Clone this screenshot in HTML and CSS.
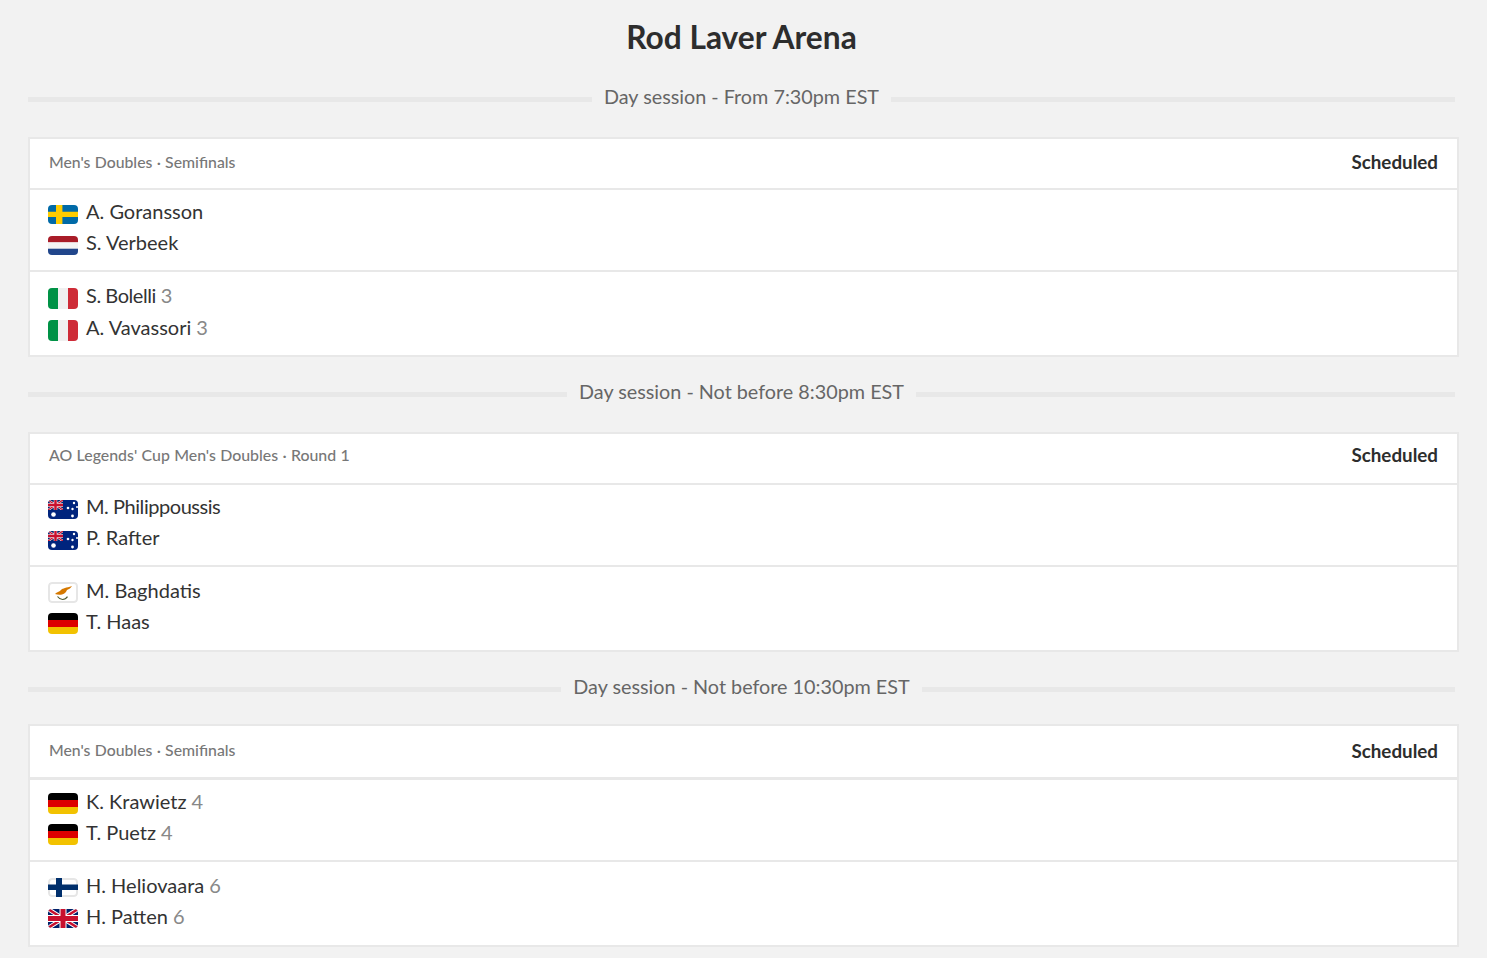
FILE: index.html
```html
<!DOCTYPE html>
<html lang="en">
<head>
<meta charset="utf-8">
<title>Rod Laver Arena</title>
<link rel="stylesheet" href="styles.css">
</head>
<body>
<svg class="defs" width="0" height="0" aria-hidden="true">
  <defs>
    <symbol id="jack" viewBox="0 0 30 19" preserveAspectRatio="none">
      <rect width="30" height="19" fill="#012169"/>
      <path d="M0 0L30 19M30 0L0 19" stroke="#fff" stroke-width="4.400"/>
      <path d="M0 0L30 19M30 0L0 19" stroke="#c8102e" stroke-width="2.400"/>
      <path d="M15 0V19M0 9.500H30" stroke="#fff" stroke-width="7"/>
      <path d="M15 0V19M0 9.500H30" stroke="#c8102e" stroke-width="5"/>
    </symbol>
    <symbol id="se" viewBox="0 0 30 19"><rect width="30" height="19" fill="#006aa7"/><path d="M8 0h6.400v19H8zM0 6.800h30v5.200H0z" fill="#fecc00"/></symbol>
    <symbol id="nl" viewBox="0 0 30 19"><rect width="30" height="6.400" fill="#a91c28"/><rect y="6.400" width="30" height="6.300" fill="#f4f4f4"/><rect y="12.700" width="30" height="6.300" fill="#21468b"/></symbol>
    <symbol id="it" viewBox="0 0 30 21"><rect width="30" height="21" fill="#f0f0f0"/><rect width="10" height="21" fill="#009246"/><rect x="20" width="10" height="21" fill="#ce2b37"/></symbol>
    <symbol id="de" viewBox="0 0 30 21"><rect width="30" height="7" fill="#000"/><rect y="7" width="30" height="7" fill="#dd0000"/><rect y="14" width="30" height="7" fill="#f2c200"/></symbol>
    <symbol id="au" viewBox="0 0 30 19">
      <rect width="30" height="19" fill="#00247d"/>
      <use href="#jack" width="15" height="10"/>
      <g fill="#fff"><circle cx="5.500" cy="14.500" r="2.300"/><circle cx="20" cy="8" r="1.300"/><circle cx="26" cy="3" r="1.200"/><circle cx="24.500" cy="9" r="1.200"/><circle cx="29" cy="7" r="1"/><circle cx="24.500" cy="16" r="1.400"/></g>
    </symbol>
    <symbol id="cy" viewBox="0 0 30 21">
      <rect x="1" y="1" width="28" height="19" rx="3" fill="#fff" stroke="#e6e6e6" stroke-width="2"/>
      <path d="M7 12c2-2 4-2 6-4s5-2 11-4c-1 2-3 3-5 4-1 2-2 4-5 4.500-3 .5-5 0-7-.5z" fill="#d57800"/>
      <path d="M9.500 14.500c1.500 2 3.500 3 5 3 1.800 0 3.800-1 5-2.800" fill="none" stroke="#4e5b31" stroke-width="1.200"/>
    </symbol>
    <symbol id="fi" viewBox="0 0 30 19">
      <rect x="1" y="1" width="28" height="17" rx="3" fill="#fff" stroke="#e6e6e6" stroke-width="2"/>
      <path d="M8 0h6v19H8zM0 6.500h30v5.500H0z" fill="#002f6c"/>
    </symbol>
  </defs>
</svg>

<main class="page">
  <h1 class="title">Rod Laver Arena</h1>

  <div class="session"><span class="session-text">Day session - From 7:30pm EST</span></div>
  <section class="card">
    <header class="card-head"><span class="event">Men's Doubles · Semifinals</span><span class="status">Scheduled</span></header>
    <div class="team">
      <div class="player"><svg class="flag flag-s"><use href="#se"/></svg><span class="name">A. Goransson</span></div>
      <div class="player"><svg class="flag flag-s"><use href="#nl"/></svg><span class="name">S. Verbeek</span></div>
    </div>
    <div class="team team-tall team-wide">
      <div class="player"><svg class="flag"><use href="#it"/></svg><span class="name name-narrow">S. Bolelli</span><span class="seed">3</span></div>
      <div class="player"><svg class="flag"><use href="#it"/></svg><span class="name">A. Vavassori</span><span class="seed">3</span></div>
    </div>
  </section>

  <div class="session"><span class="session-text">Day session - Not before 8:30pm EST</span></div>
  <section class="card">
    <header class="card-head"><span class="event event-high">AO Legends' Cup Men's Doubles · Round 1</span><span class="status status-high">Scheduled</span></header>
    <div class="team">
      <div class="player"><svg class="flag flag-s"><use href="#au"/></svg><span class="name name-narrow">M. Philippoussis</span></div>
      <div class="player"><svg class="flag flag-s"><use href="#au"/></svg><span class="name">P. Rafter</span></div>
    </div>
    <div class="team team-tall">
      <div class="player"><svg class="flag"><use href="#cy"/></svg><span class="name">M. Baghdatis</span></div>
      <div class="player"><svg class="flag"><use href="#de"/></svg><span class="name">T. Haas</span></div>
    </div>
  </section>

  <div class="session session-last"><span class="session-text">Day session - Not before 10:30pm EST</span></div>
  <section class="card card-last">
    <header class="card-head"><span class="event">Men's Doubles · Semifinals</span><span class="status">Scheduled</span></header>
    <div class="team">
      <div class="player"><svg class="flag"><use href="#de"/></svg><span class="name">K. Krawietz</span><span class="seed">4</span></div>
      <div class="player"><svg class="flag"><use href="#de"/></svg><span class="name">T. Puetz</span><span class="seed">4</span></div>
    </div>
    <div class="team team-tall">
      <div class="player"><svg class="flag flag-s"><use href="#fi"/></svg><span class="name">H. Heliovaara</span><span class="seed">6</span></div>
      <div class="player"><svg class="flag flag-s"><use href="#jack"/></svg><span class="name">H. Patten</span><span class="seed">6</span></div>
    </div>
  </section>
</main>
</body>
</html>
```
FILE: styles.css
```css
* { box-sizing: border-box; }
html, body { margin: 0; height: 100%; overflow: hidden; }
body {
  background: #f2f2f2;
  color: #333;
  font-family: Lato, "Liberation Sans", sans-serif;
}
.defs { position: absolute; }
.page { margin: 0 32px 0 28px; }
.title {
  margin: 0;
  padding-top: 17px;
  height: 62px;
  font-size: 31.7px;
  line-height: 40px;
  font-weight: 700;
  text-align: center;
  color: #2d2d2d;
}
.session {
  display: flex;
  align-items: center;
  gap: 12px;
  height: 75px;
  color: #666;
  font-size: 19.8px;
}
.session::before, .session::after {
  content: "";
  flex: 1;
  height: 5px;
  background: #e8e8e8;
}
.session-last { height: 72px; padding-top: 3px; }
.session-text { white-space: nowrap; padding-bottom: 7px; }
.card {
  margin-right: -4px;
  background: #fff;
  border: 2px solid #e8e8e8;
}
.card-head {
  display: flex;
  align-items: center;
  justify-content: space-between;
  height: 51px;
  padding: 0 19px 3px;
  border-bottom: 2px solid #e8e8e8;
}
.card-last .card-head { height: 54px; border-bottom-width: 3px; }
.event { font-size: 15.8px; word-spacing: 0.3px; font-weight: 500; color: #777; margin-bottom: 2px; }
.event-high { font-size: 15.9px; margin-bottom: 5px; }
.status { font-size: 18.8px; font-weight: 700; color: #2d2d2d; margin-bottom: 2px; }
.status-high { margin-bottom: 5px; }
.card-last .status { margin-bottom: 0; }
.team {
  display: flex;
  flex-direction: column;
  height: 82px;
  padding: 8px 18px 0;
  border-bottom: 2px solid #e8e8e8;
}
.team-tall { height: 83px; padding-top: 10px; border-bottom: 0; }
.player {
  display: flex;
  align-items: center;
  height: 31px;
  font-size: 20px;
  color: #333;
}
.team-wide .player { height: 32px; }
.flag {
  flex: none;
  width: 30px;
  height: 21px;
  margin-right: 8px;
  border-radius: 4px;
  overflow: hidden;
}
.flag-s { height: 19px; margin-top: 2px; }
.team-tall .flag-s { margin-top: 0; }
.name { white-space: nowrap; padding-bottom: 6px; }
.name-narrow { letter-spacing: -0.45px; }
.seed { margin-left: 5px; padding-bottom: 6px; color: #888; }
```
